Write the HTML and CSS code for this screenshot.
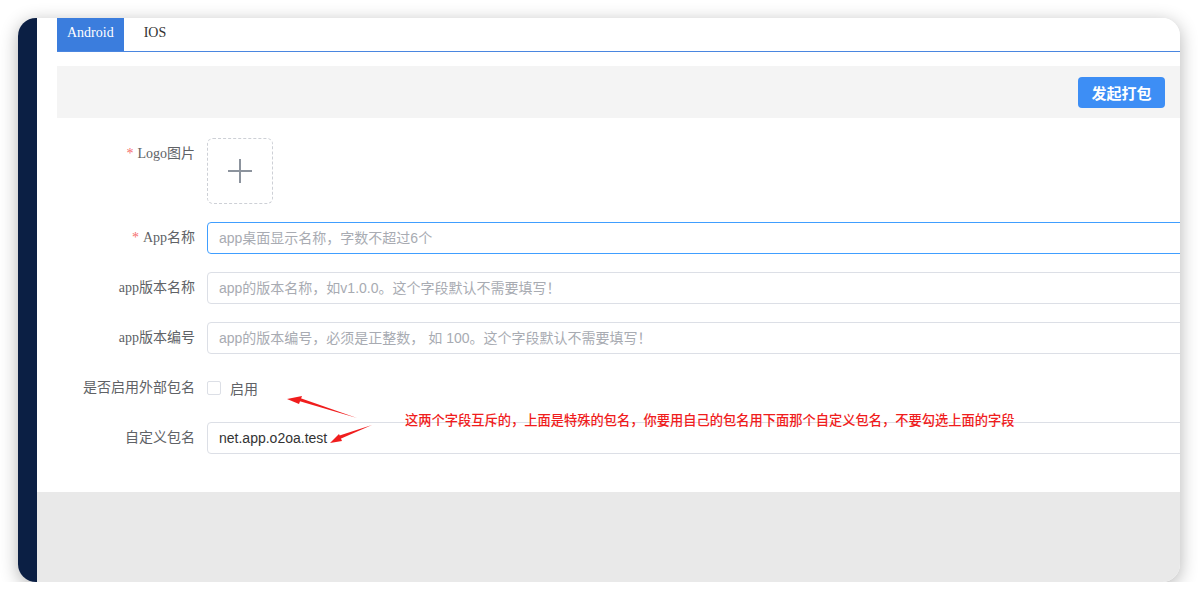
FILE: index.html
```html
<!DOCTYPE html>
<html lang="zh-CN">
<head>
  <meta charset="UTF-8">
  <title>App打包</title>
  <link rel="stylesheet" href="styles.css">
</head>
<body>
  <div class="window">
    <div class="sidebar"></div>

    <div class="main">
      <div class="content">
        <!-- Tabs -->
        <div class="tabs">
          <span class="tab active">Android</span>
          <span class="tab">IOS</span>
        </div>

        <!-- Toolbar -->
        <div class="toolbar">
          <button class="btn-primary">发起打包</button>
        </div>

        <!-- Form -->
        <form class="form">
          <div class="form-row">
            <label class="form-label"><span class="req">*</span>Logo图片</label>
            <div class="uploader"><span class="plus"></span></div>
          </div>
          <div class="form-row">
            <label class="form-label"><span class="req">*</span>App名称</label>
            <input class="input focused" type="text" placeholder="app桌面显示名称，字数不超过6个">
          </div>
          <div class="form-row">
            <label class="form-label">app版本名称</label>
            <input class="input" type="text" placeholder="app的版本名称，如v1.0.0。这个字段默认不需要填写！">
          </div>
          <div class="form-row">
            <label class="form-label">app版本编号</label>
            <input class="input" type="text" placeholder="app的版本编号，必须是正整数， 如 100。这个字段默认不需要填写！">
          </div>
          <div class="form-row">
            <label class="form-label">是否启用外部包名</label>
            <span class="checkbox"><span class="box"></span>启用</span>
          </div>
          <div class="form-row">
            <label class="form-label">自定义包名</label>
            <input class="input" type="text" value="net.app.o2oa.test">
          </div>
        </form>
      </div>

      <div class="footer"></div>
    </div>

    <!-- Annotation -->
    <svg class="arrows" viewBox="18 18 1162 564" width="1162" height="564">
      <polygon points="357,418 299,401 300,398" fill="#f01d1d"/>
      <polygon points="287,399 302,396 299,404" fill="#f01d1d"/>
      <polygon points="372,425 340,439 338,436" fill="#f01d1d"/>
      <polygon points="330,443 339,434 342,441" fill="#f01d1d"/>
    </svg>
    <div class="note">这两个字段互斥的，上面是特殊的包名，你要用自己的包名用下面那个自定义包名，不要勾选上面的字段</div>
  </div>
</body>
</html>
```

FILE: styles.css
```css
* {
  margin: 0;
  padding: 0;
  box-sizing: border-box;
}

body {
  background-color: #fff;
  font-family: "Liberation Sans", "Noto Sans CJK SC", sans-serif;
  font-size: 14px;
  color: #606266;
}

/* Window */
.window {
  position: relative;
  display: flex;
  width: 1162px;
  height: 564px;
  margin: 18px 0 0 18px;
  border-radius: 18px;
  overflow: hidden;
  box-shadow: 0 4px 18px rgba(0, 0, 0, 0.3);
}

.sidebar {
  width: 19px;
  background-color: #0b1f44;
}

.main {
  flex: 1;
  display: flex;
  flex-direction: column;
  overflow: hidden;
}

.content {
  background-color: #fff;
  padding: 0 0 38px 20px;
}

.footer {
  flex: 1;
  background-color: #e9e9e9;
}

/* Tabs */
.tabs {
  display: flex;
  height: 34px;
  border-bottom: 1px solid #4a86e0;
  font-family: "Liberation Serif", "Noto Sans CJK SC", serif;
  font-size: 14px;
}

.tab {
  padding: 0 20px;
  line-height: 29px;
  color: #333;
}

.tab.active {
  padding: 0 10px;
  background-color: #3b7ddd;
  color: #fff;
}

/* Toolbar */
.toolbar {
  display: flex;
  justify-content: flex-end;
  align-items: center;
  height: 52px;
  margin-top: 14px;
  padding-right: 15px;
  background-color: #f4f4f4;
}

.btn-primary {
  width: 87px;
  height: 31px;
  border: none;
  border-radius: 4px;
  background-color: #3d8ef5;
  color: #fff;
  font-family: "Noto Sans CJK SC", sans-serif;
  font-size: 15px;
  font-weight: bold;
}

/* Form */
.form {
  display: flex;
  flex-direction: column;
  gap: 18px;
  margin-top: 20px;
}

.form-row {
  display: flex;
  align-items: flex-start;
}

.form-label {
  flex: 0 0 150px;
  padding-right: 12px;
  text-align: right;
  line-height: 32px;
  font-family: "Liberation Serif", "Noto Sans CJK SC", serif;
  font-size: 14px;
  color: #606266;
}

.req {
  color: #f56c6c;
  margin-right: 4px;
}

.uploader {
  position: relative;
  width: 66px;
  height: 66px;
  border: 1px dashed #cdd0d6;
  border-radius: 6px;
}

.plus::before,
.plus::after {
  content: "";
  position: absolute;
  left: 50%;
  top: 50%;
  background-color: #8c939d;
}

.plus::before {
  width: 24px;
  height: 2px;
  margin: -1px 0 0 -12px;
}

.plus::after {
  width: 2px;
  height: 24px;
  margin: -12px 0 0 -1px;
}

.input {
  flex: 0 0 1000px;
  height: 32px;
  padding: 0 11px;
  border: 1px solid #dcdfe6;
  border-radius: 4px;
  font-family: "Liberation Sans", "Noto Sans CJK SC", sans-serif;
  font-size: 14px;
  color: #333;
  outline: none;
}

.input::placeholder {
  color: #a8abb2;
}

.input.focused {
  border-color: #409eff;
}

.checkbox {
  display: flex;
  align-items: center;
  height: 32px;
  font-family: "Noto Sans CJK SC", sans-serif;
  color: #606266;
}

.box {
  width: 14px;
  height: 14px;
  margin-right: 9px;
  border: 1px solid #dcdfe6;
  border-radius: 2px;
  background-color: #fff;
}

/* Annotation */
.arrows {
  position: absolute;
  left: 0;
  top: 0;
  pointer-events: none;
}

.note {
  position: absolute;
  left: 387px;
  top: 393px;
  line-height: 18px;
  font-family: "Noto Sans CJK SC", sans-serif;
  font-size: 13.25px;
  font-weight: 500;
  color: #f01d1d;
  white-space: nowrap;
}
```
